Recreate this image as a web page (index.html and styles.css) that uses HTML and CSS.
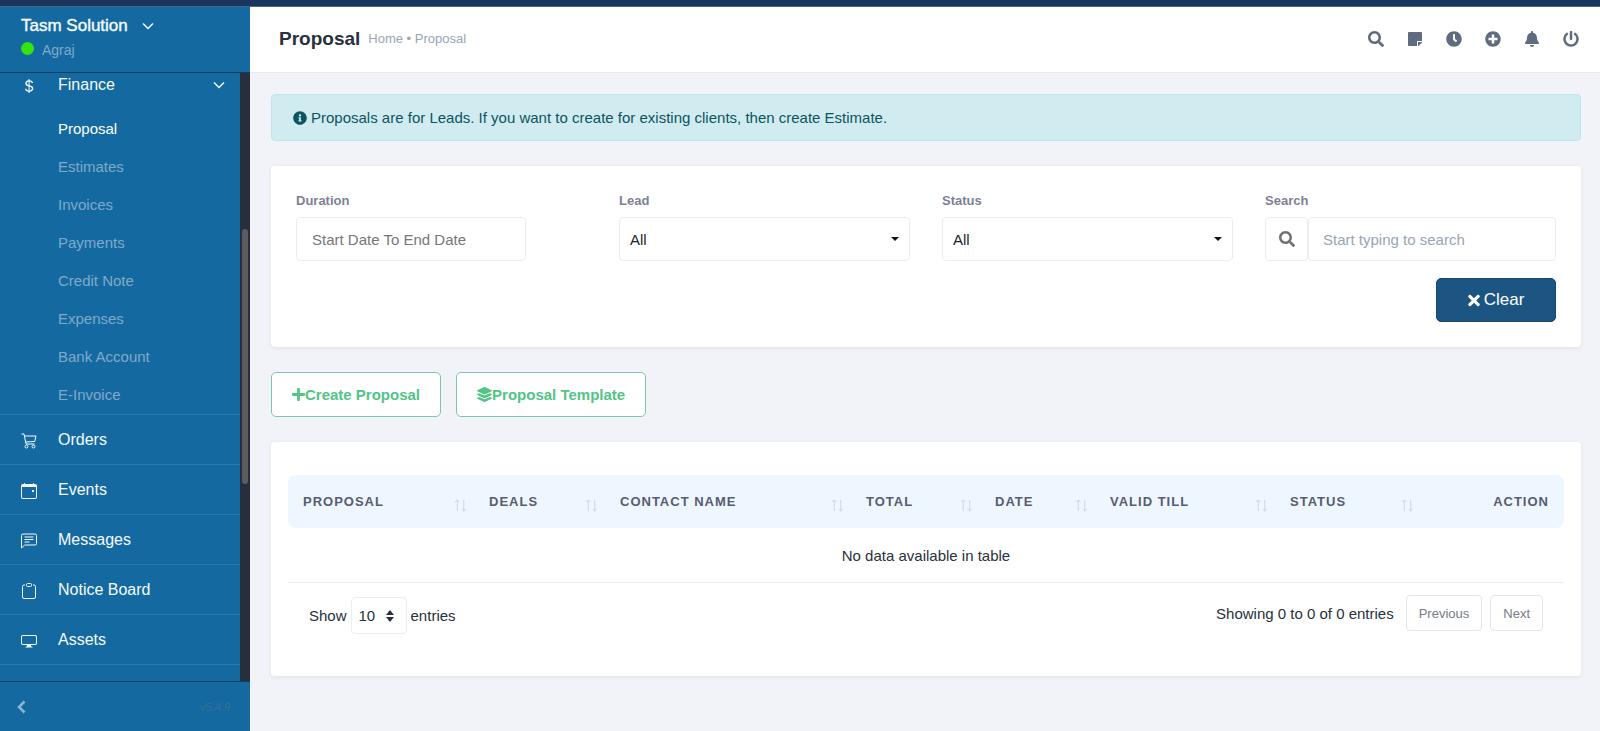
FILE: index.html
```html
<!DOCTYPE html>
<html lang="en">
<head>
<meta charset="utf-8">
<title>Proposal</title>
<link rel="stylesheet" href="styles.css">
</head>
<body>
<div class="topbar"></div>
<div class="app">
  <aside class="sidebar">
    <button class="brand" type="button">
      <span class="brand-name">Tasm Solution
        <svg class="chevron" viewBox="0 0 12 12" aria-hidden="true"><path d="M1 3.500L6 8.500L11 3.500"/></svg>
      </span>
      <span class="brand-user"><span class="status-dot"></span>Agraj</span>
    </button>
    <div class="menu-wrap">
      <nav class="menu">
        <a class="menu-item menu-open" href="#">
          <svg class="menu-icon" viewBox="0 0 16 16" aria-hidden="true"><path d="M4 10.781c.148 1.667 1.513 2.850 3.591 3.003V15h1.043v-1.216c2.270-.179 3.678-1.438 3.678-3.300 0-1.590-.947-2.510-2.956-3.028l-.722-.187V3.467c1.122.110 1.879.714 2.070 1.616h1.470c-.166-1.600-1.540-2.748-3.540-2.875V1H7.591v1.233c-1.939.230-3.270 1.472-3.270 3.156 0 1.454.966 2.483 2.661 2.917l.610.162v4.031c-1.149-.170-1.940-.800-2.131-1.718zm3.391-3.836c-1.043-.263-1.600-.825-1.600-1.616 0-.944.704-1.641 1.800-1.828v3.495l-.200-.050zm1.591 1.872c1.287.323 1.852.859 1.852 1.769 0 1.097-.826 1.828-2.200 1.939V8.730z"/></svg>
          Finance
          <svg class="chevron menu-caret" viewBox="0 0 12 12" aria-hidden="true"><path d="M1 3.500L6 8.500L11 3.500"/></svg>
        </a>
        <ul class="submenu">
          <li><a class="active" href="#">Proposal</a></li>
          <li><a href="#">Estimates</a></li>
          <li><a href="#">Invoices</a></li>
          <li><a href="#">Payments</a></li>
          <li><a href="#">Credit Note</a></li>
          <li><a href="#">Expenses</a></li>
          <li><a href="#">Bank Account</a></li>
          <li><a href="#">E-Invoice</a></li>
        </ul>
        <a class="menu-item" href="#">
          <svg class="menu-icon" viewBox="0 0 16 16" aria-hidden="true"><g class="line"><path d="M.5 1H3l2 10h8.500M3.400 3H15l-1.300 5.500-9.200.5"/><circle cx="5.500" cy="13.500" r="1.500"/><circle cx="12.500" cy="13.500" r="1.500"/></g></svg>
          Orders
        </a>
        <a class="menu-item" href="#">
          <svg class="menu-icon" viewBox="0 0 16 16" aria-hidden="true"><path d="M11 7.500a.5.5 0 0 1 .5-.5h1a.5.5 0 0 1 .5.5v1a.5.5 0 0 1-.5.5h-1a.5.5 0 0 1-.5-.5z"/><path d="M3.500 0a.5.5 0 0 1 .5.5V1h8V.5a.5.5 0 0 1 1 0V1h1a2 2 0 0 1 2 2v11a2 2 0 0 1-2 2H2a2 2 0 0 1-2-2V3a2 2 0 0 1 2-2h1V.5a.5.5 0 0 1 .5-.5M1 4v10a1 1 0 0 0 1 1h12a1 1 0 0 0 1-1V4z"/></svg>
          Events
        </a>
        <a class="menu-item" href="#">
          <svg class="menu-icon" viewBox="0 0 16 16" aria-hidden="true"><g class="line"><path d="M2 1h12a1.500 1.500 0 0 1 1.500 1.500v8A1.500 1.500 0 0 1 14 12H4.400a1.500 1.500 0 0 0-1.100.4L.5 15V2.500A1.500 1.500 0 0 1 2 1zM3.500 4h9M3.500 6.500h9M3.500 9h5"/></g></svg>
          Messages
        </a>
        <a class="menu-item" href="#">
          <svg class="menu-icon" viewBox="0 0 16 16" aria-hidden="true"><g class="line"><path d="M4 2H3a1.500 1.500 0 0 0-1.500 1.500V14A1.500 1.500 0 0 0 3 15.500h10a1.500 1.500 0 0 0 1.500-1.500V3.500A1.500 1.500 0 0 0 13 2h-1"/><rect x="5.500" y=".5" width="5" height="3" rx="1"/></g></svg>
          Notice Board
        </a>
        <a class="menu-item" href="#">
          <svg class="menu-icon" viewBox="0 0 16 16" aria-hidden="true"><path d="M0 4s0-2 2-2h12s2 0 2 2v6s0 2-2 2h-4q0 1 .25 1.500H11a.5.5 0 0 1 0 1H5a.5.5 0 0 1 0-1h.750Q6 13 6 12H2s-2 0-2-2zm1.398-.855a.8.8 0 0 0-.254.302A1.500 1.500 0 0 0 1 4.010V10c0 .325.078.502.145.602q.105.156.302.254a1.500 1.500 0 0 0 .538.143L2.010 11H14c.325 0 .502-.078.602-.145a.8.8 0 0 0 .254-.302 1.500 1.500 0 0 0 .143-.538L15 9.990V4c0-.325-.078-.502-.145-.602a.8.8 0 0 0-.302-.254A1.500 1.500 0 0 0 13.990 3H2c-.325 0-.502.078-.602.145"/></svg>
          Assets
        </a>
      </nav>
      <div class="scroll-track"><div class="scroll-thumb"></div></div>
    </div>
    <div class="sidebar-foot">
      <button class="collapse" type="button" aria-label="Collapse sidebar">
        <svg viewBox="0 0 10 14" aria-hidden="true"><path d="M8 1.500L2.500 7L8 12.500"/></svg>
      </button>
      <span class="version">v5.4.9</span>
    </div>
  </aside>

  <div class="page">
    <header class="page-head">
      <h1 class="page-title">Proposal</h1>
      <nav class="crumbs"><a href="#">Home</a> • <span>Proposal</span></nav>
      <div class="tools">
        <button type="button" aria-label="Search"><svg viewBox="0 0 512 512"><path d="M505 442.700L405.300 343c-4.500-4.500-10.600-7-17-7H372c27.600-35.300 44-79.700 44-128C416 93.100 322.900 0 208 0S0 93.100 0 208s93.100 208 208 208c48.300 0 92.700-16.400 128-44v16.300c0 6.400 2.500 12.500 7 17l99.700 99.700c9.400 9.400 24.600 9.400 33.900 0l28.300-28.300c9.400-9.400 9.400-24.600.1-34zM208 336c-70.700 0-128-57.200-128-128 0-70.700 57.200-128 128-128 70.700 0 128 57.200 128 128 0 70.700-57.200 128-128 128z"/></svg></button>
        <button type="button" aria-label="Notes"><svg viewBox="0 0 448 512"><path d="M312 320h136V56c0-13.300-10.700-24-24-24H24C10.700 32 0 42.700 0 56v400c0 13.300 10.700 24 24 24h264V344c0-13.200 10.800-24 24-24zm129 55l-98 98c-4.500 4.500-10.600 7-17 7h-6V352h128v6.100c0 6.300-2.500 12.400-7 16.900z"/></svg></button>
        <button type="button" aria-label="Timer"><svg viewBox="0 0 512 512"><path d="M256,8C119,8,8,119,8,256S119,504,256,504,504,393,504,256,393,8,256,8Zm92.490,313h0l-20,25a16,16,0,0,1-22.490,2.500h0l-67-49.720a40,40,0,0,1-15-31.230V112a16,16,0,0,1,16-16h32a16,16,0,0,1,16,16V256l58,42.500A16,16,0,0,1,348.490,321Z"/></svg></button>
        <button type="button" aria-label="Add"><svg viewBox="0 0 512 512"><path d="M256 8C119 8 8 119 8 256s111 248 248 248 248-111 248-248S393 8 256 8zm144 276c0 6.600-5.400 12-12 12h-92v92c0 6.600-5.400 12-12 12h-56c-6.600 0-12-5.400-12-12v-92h-92c-6.600 0-12-5.400-12-12v-56c0-6.600 5.400-12 12-12h92v-92c0-6.600 5.400-12 12-12h56c6.600 0 12 5.400 12 12v92h92c6.600 0 12 5.400 12 12v56z"/></svg></button>
        <button type="button" aria-label="Notifications"><svg viewBox="0 0 448 512"><path d="M224 512c35.320 0 63.970-28.650 63.970-64H160.030c0 35.350 28.650 64 63.970 64zm215.390-149.710c-19.320-20.760-55.470-51.990-55.470-154.290 0-77.700-54.480-139.900-127.940-155.160V32c0-17.670-14.320-32-31.980-32s-31.980 14.330-31.980 32v20.840C118.560 68.100 64.080 130.300 64.080 208c0 102.300-36.150 133.530-55.470 154.290-6 6.450-8.660 14.160-8.610 21.710.11 16.400 12.980 32 32.100 32h383.800c19.120 0 32-15.600 32.100-32 .05-7.550-2.610-15.270-8.610-21.710z"/></svg></button>
        <button type="button" aria-label="Log out"><svg viewBox="0 0 512 512"><path d="M400 54.100c63 45 104 118.600 104 201.900 0 136.800-110.800 247.700-247.500 248C120 504.300 8.200 393 8 256.400 7.900 173.100 48.900 99.300 111.800 54.200c11.700-8.300 28-4.800 35 7.700L162.600 90c5.900 10.500 3.100 23.800-6.600 31-41.500 30.800-68 79.600-68 134.900-.1 92.300 74.500 168.100 168 168.100 91.600 0 168.600-74.200 168-169.100-.3-51.800-24.700-101.800-68.100-134-9.700-7.200-12.400-20.500-6.500-30.900l15.800-28.100c7-12.400 23.200-16.100 34.800-7.800zM296 264V24c0-13.300-10.700-24-24-24h-32c-13.300 0-24 10.700-24 24v240c0 13.300 10.700 24 24 24h32c13.300 0 24-10.700 24-24z"/></svg></button>
      </div>
    </header>

    <main class="content">
      <div class="alert" role="note">
        <svg viewBox="0 0 512 512" aria-hidden="true"><path d="M256 8C119.043 8 8 119.083 8 256c0 136.997 111.043 248 248 248s248-111.003 248-248C504 119.083 392.957 8 256 8zm0 110c23.196 0 42 18.804 42 42s-18.804 42-42 42-42-18.804-42-42 18.804-42 42-42zm56 254c0 6.627-5.373 12-12 12h-88c-6.627 0-12-5.373-12-12v-24c0-6.627 5.373-12 12-12h12v-64h-12c-6.627 0-12-5.373-12-12v-24c0-6.627 5.373-12 12-12h64c6.627 0 12 5.373 12 12v100h12c6.627 0 12 5.373 12 12v24z"/></svg>
        Proposals are for Leads. If you want to create for existing clients, then create Estimate.
      </div>

      <form class="card filters">
        <div class="filter-grid">
          <div class="field">
            <label for="duration">Duration</label>
            <input class="control date" id="duration" type="text" placeholder="Start Date To End Date">
          </div>
          <div class="field">
            <label for="lead">Lead</label>
            <div class="select"><select class="control" id="lead"><option>All</option></select></div>
          </div>
          <div class="field">
            <label for="status">Status</label>
            <div class="select"><select class="control" id="status"><option>All</option></select></div>
          </div>
          <div class="field">
            <label for="search">Search</label>
            <div class="search">
              <span class="search-icon"><svg viewBox="0 0 512 512" aria-hidden="true"><path d="M505 442.700L405.300 343c-4.500-4.500-10.600-7-17-7H372c27.600-35.300 44-79.700 44-128C416 93.100 322.900 0 208 0S0 93.100 0 208s93.100 208 208 208c48.300 0 92.700-16.400 128-44v16.300c0 6.400 2.500 12.500 7 17l99.700 99.700c9.400 9.400 24.600 9.400 33.900 0l28.300-28.300c9.400-9.400 9.400-24.600.1-34zM208 336c-70.700 0-128-57.200-128-128 0-70.700 57.200-128 128-128 70.700 0 128 57.200 128 128 0 70.700-57.200 128-128 128z"/></svg></span>
              <input class="control" id="search" type="text" placeholder="Start typing to search">
            </div>
          </div>
        </div>
        <button class="clear" type="button">
          <svg viewBox="0 0 352 512" aria-hidden="true"><path d="M242.720 256l100.070-100.070c12.280-12.280 12.280-32.190 0-44.480l-22.240-22.240c-12.280-12.280-32.190-12.280-44.480 0L176 189.280 75.930 89.210c-12.280-12.280-32.190-12.280-44.480 0L9.210 111.450c-12.280 12.280-12.280 32.190 0 44.480L109.280 256 9.210 356.070c-12.280 12.280-12.280 32.190 0 44.480l22.240 22.240c12.280 12.280 32.200 12.280 44.480 0L176 322.720l100.070 100.070c12.280 12.280 32.200 12.280 44.480 0l22.240-22.240c12.280-12.280 12.280-32.190 0-44.480L242.720 256z"/></svg>
          Clear
        </button>
      </form>

      <div class="actions">
        <a class="action" href="#"><svg class="icon-plus" viewBox="0 0 448 512" aria-hidden="true"><path d="M416 208H272V64c0-17.670-14.330-32-32-32h-32c-17.670 0-32 14.330-32 32v144H32c-17.670 0-32 14.330-32 32v32c0 17.670 14.330 32 32 32h144v144c0 17.670 14.330 32 32 32h32c17.670 0 32-14.330 32-32V304h144c17.670 0 32-14.330 32-32v-32c0-17.670-14.330-32-32-32z"/></svg>Create Proposal</a>
        <a class="action" href="#"><svg class="icon-layers" viewBox="0 0 512 512" aria-hidden="true"><path d="M12.410 148.020l232.940 105.670c6.800 3.090 14.490 3.090 21.290 0l232.940-105.670c16.550-7.510 16.550-32.520 0-40.030L266.650 2.310a25.607 25.607 0 0 0-21.290 0L12.410 107.980c-16.550 7.510-16.550 32.530 0 40.040zm487.180 88.280l-58.090-26.330-161.640 73.270c-7.560 3.430-15.590 5.170-23.860 5.170s-16.290-1.740-23.860-5.170L70.510 209.970l-58.100 26.330c-16.550 7.500-16.550 32.500 0 40l232.940 105.590c6.800 3.080 14.490 3.080 21.290 0L499.590 276.300c16.550-7.500 16.550-32.500 0-40zm0 127.800l-57.870-26.230-161.860 73.370c-7.560 3.430-15.590 5.170-23.860 5.170s-16.290-1.740-23.860-5.170L70.290 337.870 12.410 364.100c-16.550 7.500-16.550 32.500 0 40l232.940 105.590c6.800 3.080 14.490 3.080 21.290 0L499.590 404.100c16.550-7.500 16.550-32.500 0-40z"/></svg>Proposal Template</a>
      </div>

      <section class="card listing">
        <table class="grid">
          <colgroup><col class="c-proposal"><col class="c-deals"><col class="c-contact"><col class="c-total"><col class="c-date"><col class="c-valid"><col class="c-status"><col></colgroup>
          <thead>
            <tr>
              <th><div class="th">Proposal<svg viewBox="0 0 14 14" aria-hidden="true"><path d="M3.500 13V1M1 3.500L3.500 1L6 3.500M10.500 1v12M8 10.500L10.500 13L13 10.500"/></svg></div></th>
              <th><div class="th">Deals<svg viewBox="0 0 14 14" aria-hidden="true"><path d="M3.500 13V1M1 3.500L3.500 1L6 3.500M10.500 1v12M8 10.500L10.500 13L13 10.500"/></svg></div></th>
              <th><div class="th">Contact Name<svg viewBox="0 0 14 14" aria-hidden="true"><path d="M3.500 13V1M1 3.500L3.500 1L6 3.500M10.500 1v12M8 10.500L10.500 13L13 10.500"/></svg></div></th>
              <th><div class="th">Total<svg viewBox="0 0 14 14" aria-hidden="true"><path d="M3.500 13V1M1 3.500L3.500 1L6 3.500M10.500 1v12M8 10.500L10.500 13L13 10.500"/></svg></div></th>
              <th><div class="th">Date<svg viewBox="0 0 14 14" aria-hidden="true"><path d="M3.500 13V1M1 3.500L3.500 1L6 3.500M10.500 1v12M8 10.500L10.500 13L13 10.500"/></svg></div></th>
              <th><div class="th">Valid Till<svg viewBox="0 0 14 14" aria-hidden="true"><path d="M3.500 13V1M1 3.500L3.500 1L6 3.500M10.500 1v12M8 10.500L10.500 13L13 10.500"/></svg></div></th>
              <th><div class="th">Status<svg viewBox="0 0 14 14" aria-hidden="true"><path d="M3.500 13V1M1 3.500L3.500 1L6 3.500M10.500 1v12M8 10.500L10.500 13L13 10.500"/></svg></div></th>
              <th class="last">Action</th>
            </tr>
          </thead>
          <tbody><tr><td colspan="8">No data available in table</td></tr></tbody>
        </table>
        <div class="table-foot">
          <label class="length">Show
            <span class="length-select"><select><option>10</option></select><svg viewBox="0 0 8 12" aria-hidden="true"><path d="M4 0L8 5H0zM4 12L0 7h8z"/></svg></span>
            entries
          </label>
          <div class="pager">
            <span>Showing 0 to 0 of 0 entries</span>
            <button type="button">Previous</button>
            <button type="button">Next</button>
          </div>
        </div>
      </section>
    </main>
  </div>
</div>
</body>
</html>
```
FILE: styles.css
```css
* {
  box-sizing: border-box;
}

body {
  margin: 0;
  min-height: 100vh;
  display: flex;
  flex-direction: column;
  background: #f2f3f8;
  color: #28313c;
  font-family: "Liberation Sans", Arial, sans-serif;
  font-size: 15px;
}

button,
input,
select {
  font: inherit;
}

button {
  cursor: pointer;
}

a {
  color: inherit;
  text-decoration: none;
}

svg {
  flex: none;
  fill: currentColor;
}

.topbar {
  height: 7px;
  background: #1a355e;
  border-bottom: 1px solid #4b6585;
}

.app {
  flex: 1;
  display: flex;
  height: calc(100vh - 7px);
}

/* Sidebar */
.sidebar {
  flex: none;
  width: 250px;
  display: flex;
  flex-direction: column;
  background: #146aa0;
  color: #f5fafd;
}

.brand {
  height: 66px;
  padding: 0 21px 4px;
  display: flex;
  flex-direction: column;
  justify-content: center;
  gap: 3px;
  border: 0;
  border-bottom: 1px solid #0d3e60;
  background: none;
  color: inherit;
  text-align: left;
}

.brand-name {
  display: flex;
  align-items: center;
  gap: 14px;
  font-size: 17px;
  line-height: 22px;
  -webkit-text-stroke: 0.4px;
}

.brand-user {
  display: flex;
  align-items: center;
  gap: 8px;
  color: #7fa9c9;
  font-size: 14px;
  line-height: 20px;
}

.status-dot {
  width: 13px;
  height: 13px;
  margin-bottom: 4px;
  border-radius: 50%;
  background: #37e30c;
}

.chevron {
  width: 12px;
  height: 12px;
  fill: none;
  stroke: currentColor;
  stroke-width: 1.5;
}

.menu-wrap {
  flex: 1;
  min-height: 0;
  display: flex;
  overflow: hidden;
}

.menu {
  flex: 1;
}

.menu-item {
  height: 50px;
  padding: 0 15px 0 21px;
  display: flex;
  align-items: center;
  gap: 21px;
  border-bottom: 1px solid #2a79aa;
  font-size: 16px;
}

.menu-open {
  height: 36px;
  padding-bottom: 12px;
  border-bottom: 0;
}

.menu-icon {
  width: 16px;
  height: 16px;
  margin-top: 2px;
}

.line {
  fill: none;
  stroke: currentColor;
}

.menu-caret {
  margin-left: auto;
}

.submenu {
  margin: 0;
  padding: 1px 0 0;
  border-bottom: 1px solid #2a79aa;
  list-style: none;
}

.submenu a {
  display: block;
  padding-left: 58px;
  color: #80a9c8;
  font-size: 15px;
  line-height: 38px;
}

.submenu .active {
  color: #fff;
}

.scroll-track {
  width: 10px;
  padding: 156px 2px 0;
  background: #282f3c;
}

.scroll-thumb {
  height: 255px;
  border-radius: 3px;
  background: #5d5c61;
}

.sidebar-foot {
  height: 50px;
  padding: 0 20px 0 16px;
  display: flex;
  align-items: center;
  justify-content: space-between;
  border-top: 1px solid #0d3e60;
}

.collapse {
  padding: 0;
  display: flex;
  border: 0;
  background: none;
  color: #8db5d3;
}

.collapse svg {
  width: 11px;
  height: 14px;
  fill: none;
  stroke: currentColor;
  stroke-width: 2.5;
}

.version {
  color: #3f6c8e;
  font-size: 11px;
}

/* Header */
.page {
  flex: 1;
  min-width: 0;
}

.page-head {
  height: 66px;
  padding: 0 20px 2px 29px;
  display: flex;
  align-items: center;
  gap: 8px;
  border-bottom: 1px solid #e8eaf0;
  background: #fff;
}

.page-title {
  margin: 0;
  color: #28313c;
  font-size: 19px;
}

.crumbs {
  color: #99a5b5;
  font-size: 13px;
}

.tools {
  margin-left: auto;
  display: flex;
  gap: 21px;
}

.tools button {
  width: 18px;
  height: 18px;
  padding: 0;
  display: flex;
  align-items: center;
  justify-content: center;
  border: 0;
  background: none;
  color: #5f6c80;
}

.tools svg {
  height: 16px;
}

/* Content */
.content {
  padding: 21px 19px 21px 21px;
  display: flex;
  flex-direction: column;
  gap: 25px;
}

.alert {
  padding: 12px 21px;
  display: flex;
  align-items: center;
  gap: 4px;
  border: 1px solid #bee5eb;
  border-radius: 4px;
  background: #d1ecf1;
  color: #0c5460;
  line-height: 21px;
}

.alert svg {
  width: 14px;
  height: 14px;
}

.card {
  border-radius: 4px;
  background: #fff;
  box-shadow: 0 1px 4px rgba(0, 0, 0, 0.08);
}

.filters {
  padding: 25px;
  display: flex;
  flex-direction: column;
  gap: 17px;
}

.filter-grid {
  display: grid;
  grid-template-columns: repeat(4, 1fr);
  gap: 32px;
}

.field {
  display: flex;
  flex-direction: column;
  gap: 6px;
}

.field label {
  color: #7e7f96;
  font-size: 13px;
  font-weight: bold;
  line-height: 20px;
}

.control {
  width: 100%;
  height: 44px;
  border: 1px solid #e8eef3;
  border-radius: 4px;
  background: #fff;
  color: #212529;
}

.date {
  width: 79%;
  padding: 0 15px;
}

.date::placeholder {
  color: #777;
}

.select {
  position: relative;
}

.select select {
  padding: 0 10px;
  display: block;
  appearance: none;
}

.select::after {
  content: "";
  position: absolute;
  top: 20px;
  right: 11px;
  border: 4px solid transparent;
  border-top-color: #111;
}

.search {
  display: flex;
}

.search-icon {
  flex: none;
  width: 43px;
  display: flex;
  align-items: center;
  justify-content: center;
  border: 1px solid #e8eef3;
  border-radius: 4px;
  color: #707275;
}

.search-icon svg {
  width: 16px;
  height: 16px;
}

.search .control {
  padding: 0 14px;
}

.search .control::placeholder {
  color: #99a5b5;
}

.clear {
  align-self: flex-end;
  width: 120px;
  height: 44px;
  display: flex;
  align-items: center;
  justify-content: center;
  gap: 4px;
  border: 1px solid #17486f;
  border-radius: 5px;
  background: #1d5582;
  color: #fff;
  font-size: 17px;
}

.clear svg {
  width: 12px;
  height: 17px;
}

.actions {
  display: flex;
  gap: 15px;
}

.action {
  height: 45px;
  padding: 0 20px;
  display: flex;
  align-items: center;
  border: 1px solid #7cc7a8;
  border-radius: 5px;
  background: #fff;
  color: #52c486;
  font-weight: bold;
}

.icon-plus {
  width: 13px;
  height: 15px;
}

.icon-layers {
  width: 15px;
  height: 15px;
}

/* Table */
.listing {
  padding: 33px 17px 42px;
}

.grid {
  width: 100%;
  border-collapse: separate;
  border-spacing: 0;
  table-layout: fixed;
}

.c-proposal { width: 186px; }
.c-deals { width: 131px; }
.c-contact { width: 246px; }
.c-total { width: 129px; }
.c-date { width: 115px; }
.c-valid { width: 180px; }
.c-status { width: 146px; }

.grid th {
  height: 53px;
  padding: 0 7px 1px 15px;
  background: #eef7ff;
  color: #585c70;
  font-size: 13px;
  letter-spacing: 1px;
  text-align: left;
  text-transform: uppercase;
}

.grid th:first-child {
  border-radius: 8px 0 0 8px;
}

.grid .last {
  padding-right: 15px;
  border-radius: 0 8px 8px 0;
  text-align: right;
}

.th {
  display: flex;
  justify-content: space-between;
}

.th svg {
  width: 13px;
  height: 13px;
  margin: 5px 0 -5px;
  fill: none;
  stroke: #ccd2dc;
}

.grid td {
  height: 55px;
  padding: 0;
  border-bottom: 1px solid #e9ecf0;
  text-align: center;
}

.table-foot {
  padding: 12px 21px 0;
  display: flex;
  align-items: flex-start;
  justify-content: space-between;
}

.length {
  padding-top: 2px;
  display: flex;
  align-items: center;
  gap: 4px;
}

.length-select {
  position: relative;
}

.length select {
  width: 56px;
  height: 37px;
  padding: 0 7px;
  display: block;
  border: 1px solid #e8eef3;
  border-radius: 4px;
  appearance: none;
  background: #fff;
  color: #28313c;
}

.length svg {
  position: absolute;
  top: 13px;
  right: 13px;
  width: 8px;
  height: 12px;
}

.pager {
  display: flex;
  align-items: center;
  gap: 8px;
}

.pager span {
  margin-right: 4px;
}

.pager button {
  height: 36px;
  padding: 0 12px;
  border: 1px solid #e2e5ea;
  border-radius: 4px;
  background: #fff;
  color: #757b84;
  font-size: 13px;
}
```
